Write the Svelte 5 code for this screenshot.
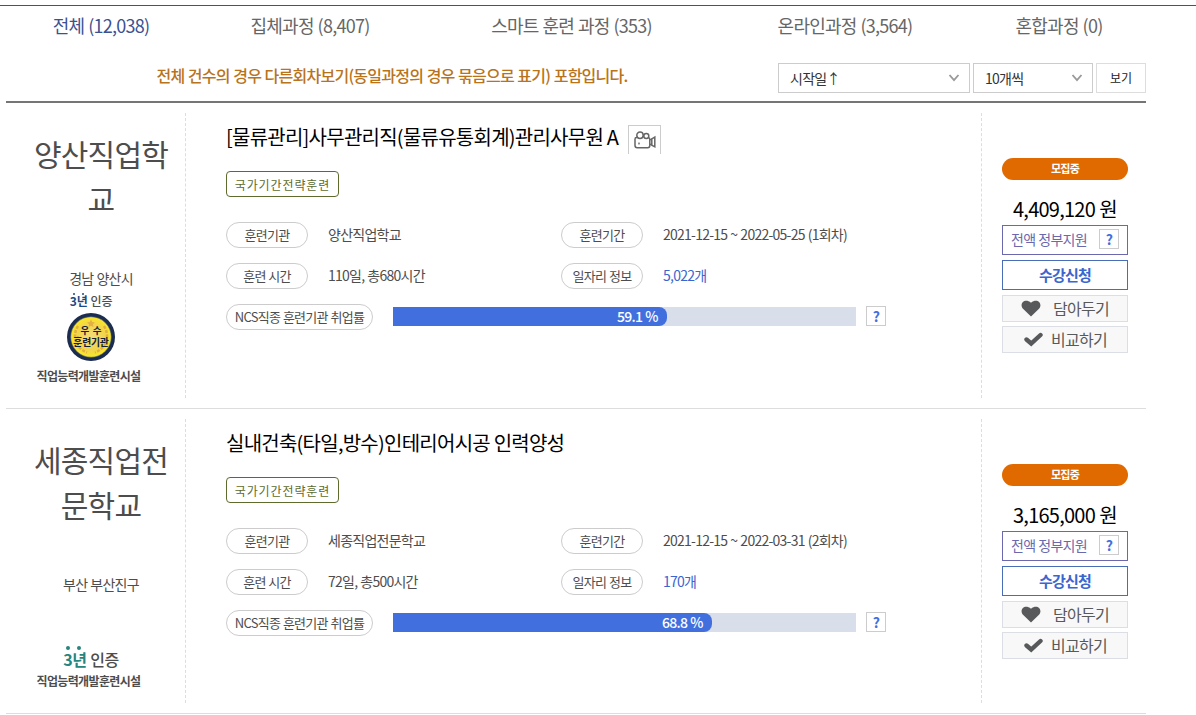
<script lang="ts">
    type Course = {
        school: string;
        region: string;
        title: string;
        video: boolean;
        grade: "excellent" | "basic";
        hours: string;
        period: string;
        jobs: string;
        rate: number;
        price: string;
    };

    const tabs = [
        { label: "전체", count: "12,038" },
        { label: "집체과정", count: "8,407" },
        { label: "스마트 훈련 과정", count: "353" },
        { label: "온라인과정", count: "3,564" },
        { label: "혼합과정", count: "0" },
    ];
    let active = $state(0);

    const courses: Course[] = [
        {
            school: "양산직업학교",
            region: "경남 양산시",
            title: "[물류관리]사무관리직(물류유통회계)관리사무원 A",
            video: true,
            grade: "excellent",
            hours: "110일, 총680시간",
            period: "2021-12-15 ~ 2022-05-25 (1회차)",
            jobs: "5,022개",
            rate: 59.1,
            price: "4,409,120",
        },
        {
            school: "세종직업전문학교",
            region: "부산 부산진구",
            title: "실내건축(타일,방수)인테리어시공 인력양성",
            video: false,
            grade: "basic",
            hours: "72일, 총500시간",
            period: "2021-12-15 ~ 2022-03-31 (2회차)",
            jobs: "170개",
            rate: 68.8,
            price: "3,165,000",
        },
    ];
</script>

{#snippet chevron()}
    <svg width="12" height="8" viewBox="0 0 12 8"><path d="M1.5 1 L6 6.2 L10.5 1" fill="none" stroke="#999" stroke-width="1.8" /></svg>
{/snippet}

<div class="page">
    <nav class="tabs">
        {#each tabs as tab, i}
            <button class="tab" class:on={i === active} onclick={() => (active = i)}>{tab.label} ({tab.count})</button>
        {/each}
    </nav>

    <div class="toolbar">
        <p class="notice">전체 건수의 경우 다른회차보기(동일과정의 경우 묶음으로 표기) 포함입니다.</p>
        <div class="select sort"><span>시작일↑</span>{@render chevron()}</div>
        <div class="select size"><span>10개씩</span>{@render chevron()}</div>
        <button class="view">보기</button>
    </div>

    <ul class="list">
        {#each courses as c}
            <li class="item">
                <div class="org">
                    <div class="school">{c.school}</div>
                    <div class="cert {c.grade}">
                        <div class="region">{c.region}</div>
                        <div class="years">
                            <b><i>3</i><i>년</i></b> 인증
                        </div>
                        {#if c.grade === "excellent"}
                            <svg class="medal" width="48" height="48" viewBox="0 0 48 48">
                                <defs>
                                    <radialGradient id="gold">
                                        <stop offset="0" stop-color="#f3dc7a" />
                                        <stop offset="0.65" stop-color="#f2d44c" />
                                        <stop offset="1" stop-color="#fbe822" />
                                    </radialGradient>
                                </defs>
                                <circle cx="24" cy="24" r="24" fill="#1b2c4f" />
                                <circle cx="24" cy="24" r="20.3" fill="url(#gold)" stroke="#41577c" stroke-width="0.6" />
                                <path d="M24 6.500l1.200 2.600 2.800.3-2.100 1.900.6 2.800-2.500-1.400-2.500 1.400.6-2.800L20 9.400l2.800-.3z" fill="#e3b043" />
                                <path d="M11 13C5 22 8 35 20 39.500M37 13C43 22 40 35 28 39.500" fill="none" stroke="#e0b040" stroke-width="2.500" stroke-dasharray="3 1.500" />
                                <text x="24" y="20.500" class="m1">우 수</text>
                                <text x="24" y="32.800" class="m2">훈련기관</text>
                            </svg>
                        {/if}
                        <div class="facility">직업능력개발훈련시설</div>
                    </div>
                </div>

                <div class="info">
                    <div class="head">
                        <h3>{c.title}</h3>
                        {#if c.video}
                            <span class="video">
                                <svg width="22" height="18" viewBox="0 0 22 18" fill="none" stroke="#666" stroke-width="1.500">
                                    <path d="M3 6.500H2.600Q1 6.500 1 8.200V14.600Q1 16.800 3.200 16.800H13.800Q15.800 16.800 15.800 14.600V8.500Q15.800 7 14.500 6.700" />
                                    <circle cx="6" cy="4.200" r="3.200" />
                                    <circle cx="12.300" cy="4.900" r="2.500" />
                                    <path d="M16 9L17.800 7.800M16 13L17.800 14.200M17.800 7.800L20.800 6V15.800L17.800 14.200Z" />
                                    <circle cx="5" cy="12.500" r="0.300" />
                                </svg>
                            </span>
                        {/if}
                    </div>
                    <span class="tag">국가기간전략훈련</span>
                    <dl>
                        <dt>훈련기관</dt>
                        <dd>{c.school}</dd>
                        <dt>훈련기간</dt>
                        <dd>{c.period}</dd>
                        <dt>훈련 시간</dt>
                        <dd>{c.hours}</dd>
                        <dt>일자리 정보</dt>
                        <dd class="link">{c.jobs}</dd>
                    </dl>
                    <div class="rate">
                        <span class="pill">NCS직종 훈련기관 취업률</span>
                        <div class="bar"><div class="fill" style={`width:${c.rate}%`}>{c.rate} %</div></div>
                        <button class="help">?</button>
                    </div>
                </div>

                <div class="side">
                    <span class="status">모집중</span>
                    <div class="price">{c.price} 원</div>
                    <div class="support"><span>전액 정부지원</span><button class="help">?</button></div>
                    <button class="apply">수강신청</button>
                    <button class="act keep">
                        <svg width="20" height="17" viewBox="0 0 20 17"><path d="M10 16.500L2 8.800C-2.200 4.200 3.500-2.600 10 2.700C16.500-2.600 22.200 4.200 18 8.800z" fill="#58595b" /></svg>
                        <span>담아두기</span>
                    </button>
                    <button class="act compare">
                        <svg width="19" height="15" viewBox="0 0 19 15"><path d="M2.500 7.500L7.200 11.500L16.500 3" fill="none" stroke="#58595b" stroke-width="4.400" stroke-linecap="round" /></svg>
                        <span>비교하기</span>
                    </button>
                </div>
            </li>
        {/each}
    </ul>
</div>

<style>
    :global(body) {
        background: #fff;
        overflow: hidden;
    }
    .page {
        box-sizing: border-box;
        height: 715px;
        padding-top: 5px;
        overflow: hidden;
        font-family: "Noto Sans CJK KR", sans-serif;
        font-size: 14px;
        letter-spacing: -0.75px;
        word-spacing: 0.6px;
        color: #4d4d4d;
    }
    .page * {
        box-sizing: border-box;
    }
    button {
        margin: 0;
        padding: 0;
        border: 0;
        background: none;
        font: inherit;
        letter-spacing: inherit;
        word-spacing: inherit;
        color: inherit;
        cursor: pointer;
    }

    .tabs {
        display: grid;
        grid-template-columns: 190px 228px 295px 252px 176px;
        height: 45px;
        padding-left: 6px;
        border-top: 1px solid #44517c;
    }
    .tab {
        height: 37px;
        font-size: 18px;
        color: #666;
    }
    .tab.on {
        color: #3b5191;
    }

    .toolbar {
        display: flex;
        width: 1140px;
        height: 53px;
        margin-left: 6px;
        padding-top: 13px;
        border-bottom: 2px solid #757575;
    }
    .notice {
        width: 772px;
        margin: 0;
        text-align: center;
        font-size: 16px;
        font-weight: 500;
        line-height: 25px;
        color: #b9731b;
    }
    .select {
        display: flex;
        align-items: center;
        justify-content: space-between;
        height: 30px;
        padding: 0 9px 0 11px;
        margin-right: 3px;
        border: 1px solid #ccc;
        color: #333;
    }
    .sort {
        width: 192px;
    }
    .size {
        width: 120px;
    }
    .view {
        width: 50px;
        height: 30px;
        padding-bottom: 1px;
        border: 1px solid #ddd;
        font-size: 12px;
        letter-spacing: 0;
        color: #222;
    }

    .list {
        width: 1140px;
        margin: 0 0 0 6px;
        padding: 0;
        list-style: none;
    }
    .item {
        display: flex;
        height: 306px;
        padding: 10px 0;
        border-bottom: 1px solid #ddd;
    }
    .item:last-child {
        height: 305px;
    }
    .org {
        display: flex;
        flex-direction: column;
        justify-content: space-between;
        width: 180px;
        padding: 18px 10px 13px;
        border-right: 1px dashed #ddd;
        text-align: center;
    }
    .school {
        width: 140px;
        margin-left: 15px;
        font-size: 30px;
        line-height: 45px;
        word-break: break-all;
    }
    .cert {
        display: flex;
        flex-direction: column;
        width: 150px;
    }
    .region {
        line-height: 20px;
        padding-left: 20px;
    }
    .years {
        padding-top: 5px;
        font-size: 12px;
        font-weight: 500;
        letter-spacing: -0.2px;
        line-height: 16px;
    }
    .years b {
        color: #1c4a82;
    }
    .years i {
        position: relative;
        font-style: normal;
    }
    .years i::before {
        content: "";
        position: absolute;
        top: 1px;
        left: 45%;
        width: 2px;
        height: 2px;
        border-radius: 50%;
        background: currentColor;
    }
    .basic .years {
        padding-top: 53px;
        padding-bottom: 1px;
        font-size: 16px;
        letter-spacing: -0.5px;
        line-height: 24px;
    }
    .basic .years b {
        color: #26857d;
    }
    .basic .years i::before {
        top: -1px;
        left: 30%;
        width: 4px;
        height: 4px;
    }
    .medal {
        align-self: center;
        margin-top: 4px;
    }
    .medal text {
        text-anchor: middle;
        font-weight: 700;
        fill: #10203a;
    }
    .m1 {
        font-size: 9.5px;
        letter-spacing: 0;
        word-spacing: 1.5px;
    }
    .m2 {
        font-size: 9.8px;
        letter-spacing: -0.2px;
    }
    .facility {
        margin: 6px 0 0 -5px;
        font-size: 12px;
        font-weight: 700;
        letter-spacing: -0.65px;
        line-height: 18px;
        white-space: nowrap;
    }
    .basic .facility {
        margin-top: 0;
    }

    .info {
        width: 795px;
        padding: 12px 0 0 40px;
    }
    .head {
        display: flex;
        height: 46px;
    }
    h3 {
        margin: 0;
        font-size: 20px;
        font-weight: 400;
        line-height: 24px;
        word-spacing: 0;
        color: #000;
    }
    .video {
        width: 33px;
        height: 29px;
        margin-left: 10px;
        padding: 5px 0 0 5px;
        border: 1px solid #ccc;
        border-bottom: 0;
    }
    .tag {
        display: block;
        width: 113px;
        height: 26px;
        border: 1px solid #5d6b2c;
        border-radius: 4px;
        text-align: center;
        font-size: 12px;
        letter-spacing: 0.9px;
        line-height: 25px;
        color: #5d6b2c;
    }
    dl {
        display: grid;
        grid-template-columns: 82px 253px 82px 1fr;
        row-gap: 15px;
        margin: 25px 0 0;
    }
    dt,
    .pill {
        height: 26px;
        border: 1px solid #ccc;
        border-radius: 13px;
        text-align: center;
        font-size: 13px;
        line-height: 24px;
    }
    dd {
        margin: 0;
        padding-left: 20px;
        line-height: 25px;
    }
    .link {
        color: #3a66d0;
    }
    .rate {
        display: flex;
        align-items: flex-start;
        margin-top: 15px;
    }
    .pill {
        width: 147px;
    }
    .bar {
        width: 463px;
        height: 19px;
        margin: 3px 10px 0 20px;
        background: #d8deea;
    }
    .fill {
        height: 19px;
        padding-right: 9px;
        border-radius: 0 8px 8px 0;
        background: #4170de;
        text-align: right;
        font-weight: 500;
        line-height: 18px;
        color: #fff;
    }
    .help {
        width: 20px;
        height: 20px;
        border: 1px solid #ccc;
        background: #fff;
        font-weight: 700;
        line-height: 18px;
        color: #4170de;
    }
    .rate .help {
        margin-top: 2px;
    }

    .side {
        display: flex;
        flex-direction: column;
        width: 165px;
        padding: 45px 18px 0 20px;
        border-left: 1px dashed #ddd;
    }
    .status {
        height: 22px;
        border-radius: 11px;
        background: #e06a00;
        text-align: center;
        font-size: 11px;
        font-weight: 700;
        line-height: 21px;
        color: #fff;
    }
    .price {
        margin-top: 15px;
        height: 30px;
        text-align: center;
        font-size: 20px;
        line-height: 27px;
        color: #000;
    }
    .support {
        display: flex;
        align-items: center;
        justify-content: space-between;
        height: 30px;
        padding: 0 8px 2px;
        border: 1px solid #6b68ae;
        color: #6b68ae;
    }
    .apply {
        height: 30px;
        margin-top: 5px;
        padding-bottom: 2px;
        border: 1px solid #4a6db8;
        font-size: 15px;
        font-weight: 700;
        color: #3a66d0;
    }
    .act {
        display: flex;
        align-items: center;
        height: 27px;
        margin-top: 5px;
        border: 1px solid #dcdee6;
        background: #f8f8f8;
        font-size: 16px;
        line-height: 24px;
        color: #58595b;
    }
    .act span {
        margin-top: -2px;
    }
    .act + .act {
        margin-top: 4px;
    }
    .keep {
        padding-left: 18px;
        gap: 12px;
    }
    .compare {
        padding-left: 21px;
        gap: 8px;
    }
</style>
